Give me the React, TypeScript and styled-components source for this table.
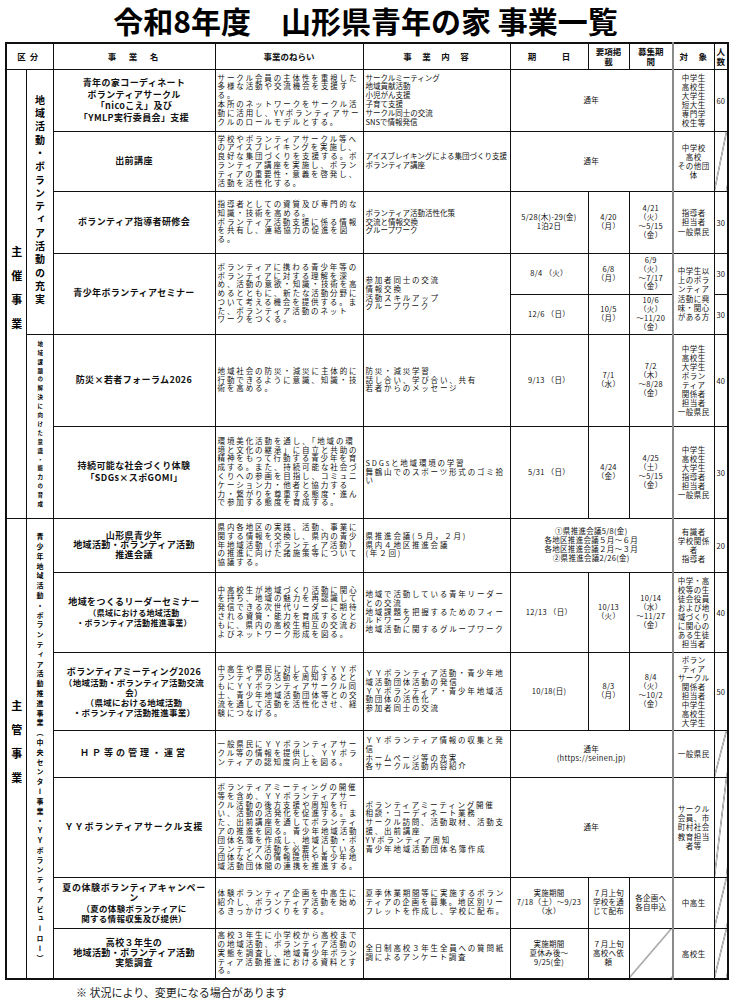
import styled, { createGlobalStyle, css } from 'styled-components';

const GlobalStyle = createGlobalStyle`
  html, body {
    margin: 0;
    padding: 0;
    background: #fff;
  }
  body {
    font-family: "Noto Sans CJK JP", "Noto Sans", sans-serif;
    color: #000;
  }
`;

const Page = styled.div`
  width: 731px;
`;

const Title = styled.h1`
  margin: 0;
  height: 42px;
  line-height: 40px;
  text-align: center;
  font-size: 30px;
  font-weight: 700;
  white-space: pre;
`;

const Sheet = styled.table`
  margin-left: 5px;
  width: 722px;
  table-layout: fixed;
  border-collapse: collapse;
  border: 2px solid #111;
`;

const Col = styled.col<{ $w: number }>`
  width: ${p => p.$w}px;
`;

const Row = styled.tr<{ $h: number }>`
  height: ${p => p.$h}px;
`;

const cellBase = css`
  border: 1px solid #111;
  padding: 1px 2px;
  vertical-align: middle;
  white-space: pre;
  overflow: hidden;
  font-weight: 400;
  color: #111;
`;

const slash = css`
  background: linear-gradient(
    to bottom right,
    transparent calc(50% - 0.7px),
    #333 50%,
    transparent calc(50% + 0.7px)
  );
`;

const Head = styled.th<{ $ls?: number; $target?: boolean; $narrow?: boolean }>`
  ${cellBase};
  text-align: center;
  font-size: 8.5px;
  font-weight: 700;
  line-height: 10px;
  letter-spacing: ${p => p.$ls ?? 0}px;
  ${p => p.$target && css`border-left: 2px solid #8a8a8a;`}
  ${p => p.$narrow && css`padding: 0;`}
`;

const GroupCell = styled.td`
  border: 1px solid #111;
  padding: 0;
  vertical-align: middle;
`;

const Vertical = styled.div<{ $size: number; $ls: number }>`
  writing-mode: vertical-rl;
  text-orientation: upright;
  margin: 0 auto;
  font-size: ${p => p.$size}px;
  letter-spacing: ${p => p.$ls}px;
  font-weight: 700;
  line-height: 1;
  white-space: nowrap;
`;

const Name = styled.td<{ $ls?: number; $lh?: number }>`
  ${cellBase};
  text-align: center;
  font-size: 9px;
  font-weight: 700;
  letter-spacing: ${p => p.$ls ?? 0.4}px;
  line-height: ${p => p.$lh ?? 10.5}px;
`;

const Sub = styled.span<{ $size?: number }>`
  display: block;
  font-size: ${p => p.$size ?? 8}px;
  line-height: 10px;
  letter-spacing: 0.3px;
`;

const Aim = styled.td`
  ${cellBase};
  text-align: left;
  font-size: 7.5px;
  letter-spacing: 1.9px;
  line-height: 8.8px;
`;

const Content = styled.td<{ $tight?: boolean }>`
  ${cellBase};
  text-align: left;
  font-size: 7.5px;
  letter-spacing: ${p => (p.$tight ? 0 : 1.8)}px;
  line-height: 8.8px;
`;

const DateCell = styled.td<{ $slash?: boolean }>`
  ${cellBase};
  text-align: center;
  font-size: 7.5px;
  letter-spacing: 0.3px;
  line-height: 8.8px;
  ${p => p.$slash && slash};
`;

const Target = styled.td`
  ${cellBase};
  border-left: 2px solid #8a8a8a;
  text-align: center;
  font-size: 7.5px;
  letter-spacing: 0.5px;
  line-height: 9.1px;
`;

const Count = styled.td<{ $slash?: boolean }>`
  ${cellBase};
  padding: 0;
  text-align: center;
  font-size: 7.5px;
  ${p => p.$slash && slash};
`;

const Note = styled.p`
  margin: 5px 0 0 76px;
  font-size: 11px;
  line-height: 14px;
  color: #222;
`;

const widths = [20, 27, 162, 148, 147, 78, 41, 44, 41, 14];

export default function App() {
  return (
    <Page>
      <GlobalStyle />
      <Title>{'令和8年度　山形県青年の家 事業一覧'}</Title>
      <Sheet>
        <colgroup>
          {widths.map((w, i) => (
            <Col key={i} $w={w} />
          ))}
        </colgroup>
        <thead>
          <Row $h={26}>
            <Head colSpan={2} $ls={4}>区分</Head>
            <Head $ls={2}>{'事　業　名'}</Head>
            <Head>事業のねらい</Head>
            <Head $ls={1}>{'事　業　内　容'}</Head>
            <Head>{'期　　　日'}</Head>
            <Head>{'要項掲\n載'}</Head>
            <Head>{'募集期\n間'}</Head>
            <Head $target $ls={1}>{'対　象'}</Head>
            <Head $narrow>{'人\n数'}</Head>
          </Row>
        </thead>
        <tbody>
          <Row $h={62}>
            <GroupCell rowSpan={7}>
              <Vertical $size={11} $ls={13}>主催事業</Vertical>
            </GroupCell>
            <GroupCell rowSpan={5}>
              <Vertical $size={10} $ls={3.3}>地域活動・ボランティア活動の充実</Vertical>
            </GroupCell>
            <Name $lh={11.5}>
              {'青年の家コーディネート\nボランティアサークル\n「nicoこえ」及び\n「YMLP実行委員会」支援'}
            </Name>
            <Aim>
              {'サークル会員の主体性を重視した\n多様な活動や交流機会を支援す\nる。\n本所のネットワークをサークル活\n動に活用し、YYボランティアサー\nクルのロールモデルとする。'}
            </Aim>
            <Content $tight>
              {'サークルミーティング\n地域貢献活動\n小児がん支援\n子育て支援\nサークル同士の交流\nSNSで情報発信'}
            </Content>
            <DateCell colSpan={3}>通年</DateCell>
            <Target>{'中学生\n高校生\n大学生\n短大生\n専門学\n校生等'}</Target>
            <Count>60</Count>
          </Row>

          <Row $h={60}>
            <Name>出前講座</Name>
            <Aim>
              {'学校やボランティアサークル等へ\nのアイスブレイキングを実施し、\n良好な集団づくりを支援する。ボ\nランティア講座を実施し、ボラン\nティアの重要性・意義を啓発し、\n活動を活性化する。'}
            </Aim>
            <Content $tight>{'アイスブレイキングによる集団づくり支援\nボランティア講座'}</Content>
            <DateCell colSpan={3}>通年</DateCell>
            <Target>{'中学校\n高校\nその他団\n体'}</Target>
            <Count $slash />
          </Row>

          <Row $h={62}>
            <Name>ボランティア指導者研修会</Name>
            <Aim>
              {'指導者としての資質及び専門的な\n知識・技術を高める。\nボランティア活動支援に係る情報\nを共有し、連絡協力の促進を図\nる。'}
            </Aim>
            <Content $tight>{'ボランティア活動活性化策\n交流と情報交換\nグループワーク'}</Content>
            <DateCell>{'5/28(木)-29(金)\n1泊2日'}</DateCell>
            <DateCell>{'4/20\n（月）'}</DateCell>
            <DateCell>{'4/21\n（火）\n～5/15\n（金）'}</DateCell>
            <Target>{'指導者\n担当者\n一般県民'}</Target>
            <Count>30</Count>
          </Row>

          <Row $h={41}>
            <Name rowSpan={2}>青少年ボランティアセミナー</Name>
            <Aim rowSpan={2}>
              {'ボランティアに携わる青少年等の\nボランティアに対する理解を深\nめ、活動の意欲・知識・技術を高\nめるとともに、新たな活動分野に\nついて考える機会を提供する。ま\nた、ボランティア活動のネット\nワークをつくる。'}
            </Aim>
            <Content rowSpan={2}>{'参加者同士の交流\n情報交換\n活動スキルアップ\nグループワーク'}</Content>
            <DateCell>{'8/4 （火）'}</DateCell>
            <DateCell>{'6/8\n（月）'}</DateCell>
            <DateCell>{'6/9\n（火）\n～7/17\n（金）'}</DateCell>
            <Target rowSpan={2}>{'中学生以\n上のボラ\nンティア\n活動に興\n味・関心\nがある方'}</Target>
            <Count>30</Count>
          </Row>
          <Row $h={40}>
            <DateCell>{'12/6 （日）'}</DateCell>
            <DateCell>{'10/5\n（月）'}</DateCell>
            <DateCell>{'10/6\n（火）\n～11/20\n（金）'}</DateCell>
            <Count>30</Count>
          </Row>

          <Row $h={92}>
            <GroupCell rowSpan={2}>
              <Vertical $size={5.5} $ls={3.4}>地域課題の解決に向けた意識・能力の育成</Vertical>
            </GroupCell>
            <Name>防災×若者フォーラム2026</Name>
            <Aim>
              {'地域社会の防災・減災に主体的に\n行動できるように意識、知識・技\n術を高める。'}
            </Aim>
            <Content>{'防災・減災学習\n話し合い、学び合い、共有\n若者からのメッセージ'}</Content>
            <DateCell>{'9/13 （日）'}</DateCell>
            <DateCell>{'7/1\n（水）'}</DateCell>
            <DateCell>{'7/2\n（木）\n～8/28\n（金）'}</DateCell>
            <Target>{'中学生\n高校生\n大学生\nボラン\nティア\n関係者\n担当者\n一般県民'}</Target>
            <Count>40</Count>
          </Row>

          <Row $h={92}>
            <Name $lh={12}>{'持続可能な社会づくり体験\n「SDGs×スポGOMI」'}</Name>
            <Aim>
              {'環境美化活動を通し、「地域の環\n境と文化の継承」に自立と共助の\n精神をもって行動する青少年を育\n成する。また、持続可能な社会づ\nくりへの参画を目指し、コミュニ\nケーション力・他者と協力する\n力・繋がりを尊重する態度・進ん\nで参加する態度を育成する。'}
            </Aim>
            <Content>{'SDGsと地域環境の学習\n舞鶴山でのスポーツ形式のゴミ拾\nい'}</Content>
            <DateCell>{'5/31 （日）'}</DateCell>
            <DateCell>{'4/24\n（金）'}</DateCell>
            <DateCell>{'4/25\n（土）\n～5/15\n（金）'}</DateCell>
            <Target>{'中学生\n高校生\n大学生\n指導者\n担当者\n一般県民'}</Target>
            <Count>30</Count>
          </Row>

          <Row $h={54}>
            <GroupCell rowSpan={7}>
              <Vertical $size={11} $ls={13}>主管事業</Vertical>
            </GroupCell>
            <GroupCell rowSpan={7}>
              <Vertical $size={7} $ls={2.8}>
                青少年地域活動・ボランティア活動推進事業（中央センター事業・ＹＹボランティアビューロー）
              </Vertical>
            </GroupCell>
            <Name $lh={9.5}>{'山形県青少年\n地域活動・ボランティア活動\n推進会議'}</Name>
            <Aim>
              {'県内各地区の実践、活動、事業に\n関する情報を交換し、県内の青少\n年地域活動（ボランティア活動）\nの推進に向けた諸施策等について\n協議する。'}
            </Aim>
            <Content>{'県推進会議(５月，２月)\n県内４地区推進会議\n(年２回)'}</Content>
            <DateCell colSpan={3}>
              {'①県推進会議5/8(金)\n各地区推進会議５月～６月\n各地区推進会議２月～３月\n②県推進会議2/26(金)'}
            </DateCell>
            <Target>{'有識者\n学校関係\n者\n指導者'}</Target>
            <Count>20</Count>
          </Row>

          <Row $h={80}>
            <Name $lh={12}>
              地域をつくるリーダーセミナー
              <Sub>{'（県域における地域活動\n・ボランティア活動推進事業）'}</Sub>
            </Name>
            <Aim>
              {'中高校生が地域づくり活動に関心\nを持ち、地域の魅力を再認識して\n発信できる次世代リーダーに期待\nされる資質・能力を育成するとと\nもに、県内の高校生相互の交流お\nよびネットワーク形成を図る。'}
            </Aim>
            <Content>
              {'地域で活動している青年リーダー\nとの交流\n地域課題を把握するためのフィー\nルドワーク\n地域活動に関するグループワーク'}
            </Content>
            <DateCell>{'12/13 （日）'}</DateCell>
            <DateCell>{'10/13\n（火）'}</DateCell>
            <DateCell>{'10/14\n（水）\n～11/27\n（金）'}</DateCell>
            <Target>{'中学・高\n校等の生\n徒会役員\nおよび地\n域づくり\nに関心の\nある生徒\n担当者'}</Target>
            <Count>40</Count>
          </Row>

          <Row $h={78}>
            <Name $lh={11}>
              ボランティアミーティング2026
              <Sub $size={8.5}>
                {'（地域活動・ボランティア活動交流\n会）\n（県域における地域活動\n・ボランティア活動推進事業）'}
              </Sub>
            </Name>
            <Aim>
              {'中高生や県民に対して広くＹＹボ\nランティアの活動を周知するとと\nもにＹＹボランティアサークル同\n士、青少年地域活動団体等との交\n流を通して活動を活性化させ、経\n験につなげる。'}
            </Aim>
            <Content>
              {'ＹＹボランティア活動・青少年地\n域活動団体活動の発信\nＹＹボランティア・青少年地域活\n動団体の活性化\n参加者同士の交流'}
            </Content>
            <DateCell>{'10/18(日)'}</DateCell>
            <DateCell>{'8/3\n（月）'}</DateCell>
            <DateCell>{'8/4\n（火）\n～10/2\n（金）'}</DateCell>
            <Target>{'ボラン\nティア\nサークル\n関係者\n担当者\n中学生\n高校生\n大学生'}</Target>
            <Count>50</Count>
          </Row>

          <Row $h={47}>
            <Name $ls={3}>ＨＰ等の管理・運営</Name>
            <Aim>
              {'一般県民にＹＹボランティアサー\nクル等の情報を提供し、ＹＹボラ\nンティアの認知度向上を図る。'}
            </Aim>
            <Content>
              {'ＹＹボランティア情報の収集と発\n信\nホームページ等の充実\n各サークル活動内容紹介'}
            </Content>
            <DateCell colSpan={3}>{'通年\n(https://seinen.jp)'}</DateCell>
            <Target>一般県民</Target>
            <Count $slash />
          </Row>

          <Row $h={100}>
            <Name $ls={1}>ＹＹボランティアサークル支援</Name>
            <Aim>
              {'ボランティアミーティングの開催\n等を含め、ＹＹボランティアサー\nクル活動の後方支援や周知を行\nい、活動の活発化を促進する。ま\nた、出前講座を通してボランティ\nアの推進を図る。青少年地域活動\n団体名簿を作成し、地域活動・ボ\nランティア活動を必要としている\n団体などへの情報提供や青少年地\n域活動団体間の連携を推進する。'}
            </Aim>
            <Content>
              {'ボランティアミーティング開催\n相談・コーディネート業務\nサークル訪問、活動取材、活動支\n援、出前講座\nYYボランティア周知\n青少年地域活動団体名簿作成'}
            </Content>
            <DateCell colSpan={3}>通年</DateCell>
            <Target>{'サークル\n会員、市\n町村社会\n教育担当\n者等'}</Target>
            <Count $slash />
          </Row>

          <Row $h={51}>
            <Name $ls={0.6} $lh={10}>
              {'夏の体験ボランティアキャンペー\nン'}
              <Sub $size={8.5}>{'（夏の体験ボランティアに\n関する情報収集及び提供）'}</Sub>
            </Name>
            <Aim>
              {'体験ボランティア企画を中高生に\n紹介し、ボランティア活動を始め\nるきっかけづくりをする。'}
            </Aim>
            <Content>
              {'夏季休業期間等に実施するボラン\nティアの企画を募集。地区別リー\nフレットを作成し、学校に配布。'}
            </Content>
            <DateCell>{'実施期間\n7/18（土）～9/23\n（水）'}</DateCell>
            <DateCell>{'７月上旬\n学校を通\nじて配布'}</DateCell>
            <DateCell>{'各企画へ\n各自申込'}</DateCell>
            <Target>中高生</Target>
            <Count $slash />
          </Row>

          <Row $h={51}>
            <Name $lh={10}>{'高校３年生の\n地域活動・ボランティア活動\n実態調査'}</Name>
            <Aim>
              {'高校３年生に小学校から高校まで\nの地域活動、ボランティア活動の\n実態を調査し、地域青少年ボラン\nティア活動推進における資料とす\nる。'}
            </Aim>
            <Content>{'全日制高校３年生全員への質問紙\n調によるアンケート調査'}</Content>
            <DateCell>{'実施期間\n夏休み後～\n9/25(金)'}</DateCell>
            <DateCell>{'７月上旬\n高校へ依\n頼'}</DateCell>
            <DateCell $slash />
            <Target>高校生</Target>
            <Count $slash />
          </Row>
        </tbody>
      </Sheet>
      <Note>※ 状況により、変更になる場合があります</Note>
    </Page>
  );
}
